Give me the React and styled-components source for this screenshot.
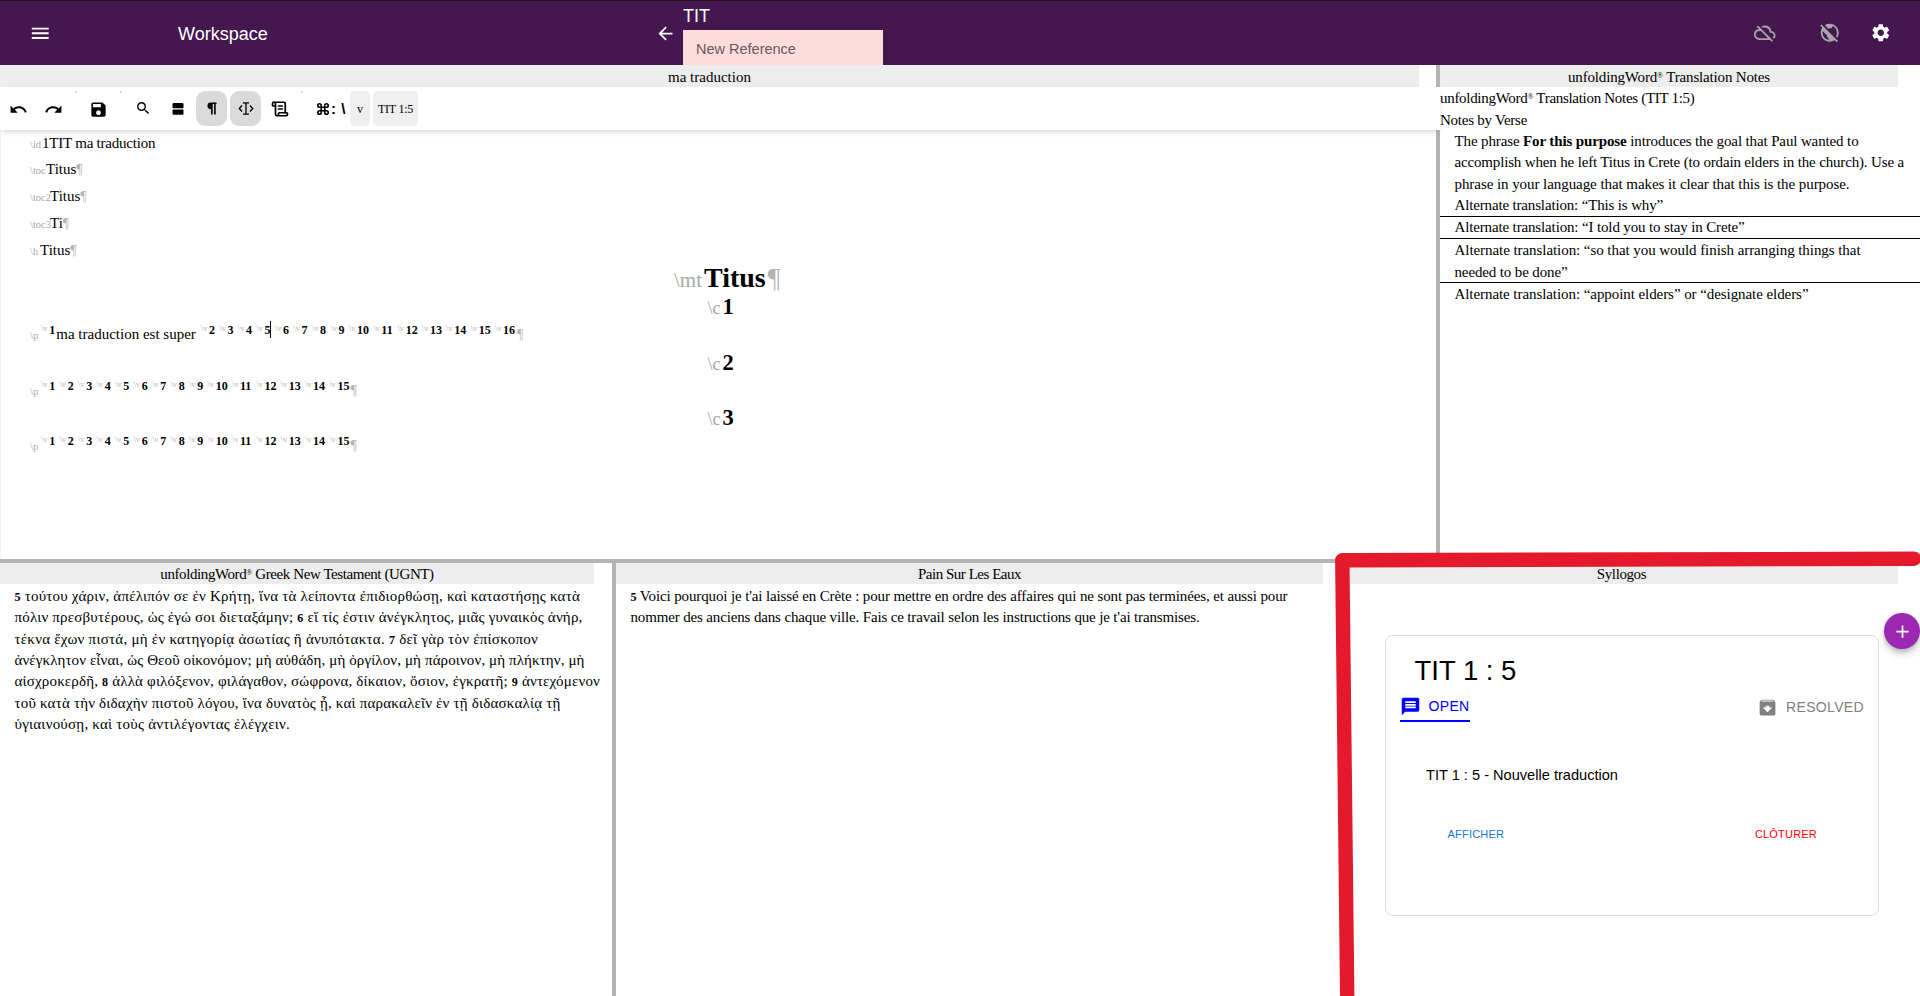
import React from "react";
import styled, { createGlobalStyle } from "styled-components";
import {
  MdMenu, MdArrowBack, MdOutlineCloudOff, MdPublicOff, MdSettings, MdUndo, MdRedo,
  MdSave, MdSearch, MdMessage, MdArchive, MdAdd,
} from "react-icons/md";
import { LuScrollText, LuCommand } from "react-icons/lu";

const serif = `"Liberation Serif", serif`;
const sans = `"Liberation Sans", sans-serif`;

const Global = createGlobalStyle`
  * { box-sizing: border-box; }
  body { margin: 0; background: #fff; color: #000; font-family: ${serif}; font-size: 15px; overflow: hidden; }
`;

const Page = styled.div`
  position: relative;
  display: flex;
  flex-direction: column;
  width: 1920px;
  height: 996px;
  overflow: hidden;
`;

const TopBar = styled.header`
  display: flex;
  align-items: center;
  height: 65px;
  flex: none;
  border-top: 1px solid #1a141c;
  background: #44174e;
  color: #fff;
  font-family: ${sans};
  padding: 0 29px 0 28.5px;
`;
const MenuSlot = styled.div`
  width: 149.5px;
  display: flex;
`;
const AppTitle = styled.div`
  width: 476.5px;
  font-size: 18px;
  line-height: 22px;
  padding-top: 1px;
`;
const BackSlot = styled.div`
  width: 28.5px;
  display: flex;
`;
const Book = styled.div`
  display: flex;
  flex-direction: column;
  align-self: stretch;
  width: 200px;
  font-size: 18px;
  line-height: 29px;
`;
const BookName = styled.div`
  height: 29px;
  line-height: 30px;
`;
const ReferenceField = styled.div`
  height: 35px;
  background: #ffdcdc;
  color: #675a5c;
  padding-left: 13px;
  font-size: 14.5px;
  line-height: 38px;
`;
const BarIcons = styled.div`
  display: flex;
  align-items: center;
  margin-left: auto;
  svg { display: block; }
  svg:nth-child(1) { margin-right: 43.5px; }
  svg:nth-child(2) { margin-right: 29px; }
`;

const Row = styled.div`
  display: flex;
  height: ${(p) => p.$h}px;
  flex: none;
`;
const VDivider = styled.div`
  width: 4px;
  flex: none;
  background: #b4b4b4;
`;
const HDivider = styled.div`
  height: 4px;
  flex: none;
  background: #b4b4b4;
`;
const Panel = styled.section`
  display: flex;
  flex-direction: column;
  width: ${(p) => p.$w}px;
  flex: none;
`;
const PanelHeader = styled.div`
  height: ${(p) => p.$h || 21}px;
  flex: none;
  margin-right: ${(p) => p.$gap}px;
  background: #ededed;
  text-align: center;
  line-height: ${(p) => (p.$h === 22 ? 24 : 22)}px;
  white-space: nowrap;
`;
const Text = styled.span`
  letter-spacing: ${(p) => p.$ls || 0}px;
  white-space: pre;
`;
const Reg = styled.span`
  font-size: 8px;
  line-height: 0;
  vertical-align: 4.5px;
`;

const Toolbar = styled.div`
  position: relative;
  z-index: 1;
  display: flex;
  align-items: flex-start;
  width: 1440px;
  height: 43px;
  flex: none;
  padding: 4px 0 0 0;
  background: #fff;
  box-shadow: 0 3px 6px -2px rgba(0, 0, 0, 0.22);
`;
const Tool = styled.div`
  display: flex;
  align-items: center;
  justify-content: center;
  width: ${(p) => p.$w || 31}px;
  height: 35px;
  margin-right: ${(p) => p.$mr ?? 3}px;
  border-radius: ${(p) => p.$r || 9}px;
  background: ${(p) => p.$bg || "transparent"};
  padding-top: ${(p) => p.$pt || 0}px;
  font-size: 12px;
  svg { display: block; }
`;
const Tick = styled.div`
  width: 2px;
  height: 2px;
  background: #d8d8d8;
`;
const Prompt = styled.div`
  display: flex;
  align-items: center;
  gap: 1px;
  width: 47px;
  height: 35px;
  padding-left: 13px;
  font: bold 15px/16px ${sans};
`;

const EditorBody = styled.div`
  flex: 1;
  border-left: 1px solid #f4f4f4;
`;
const Para = styled.div`
  height: ${(p) => p.$h}px;
  line-height: ${(p) => p.$h}px;
  margin-top: ${(p) => p.$mt || 0}px;
  padding-left: ${(p) => p.$x ?? 29}px;
  white-space: pre;
  font-size: ${(p) => p.$size || 15}px;
  display: ${(p) => (p.$block ? "block" : "flex")};
  align-items: baseline;
`;
const Marker = styled.span`
  color: #a8a8a8;
  font-size: ${(p) => p.$size || 10.5}px;
  width: ${(p) => (p.$w ? p.$w + "px" : "auto")};
  display: inline-block;
`;
const Pilcrow = styled.span`
  color: #b4b4b4;
  font-size: ${(p) => p.$size || 14}px;
  margin-left: ${(p) => p.$ml || 0}px;
`;
const Verse = styled.span`
  display: inline-block;
  width: ${(p) => p.$w}px;
  line-height: 0;
  vertical-align: 5px;
  font-size: 12px;
  font-weight: bold;
`;
const VerseMarker = styled.span`
  display: inline-block;
  width: 8.2px;
  font-size: 8.5px;
  font-weight: normal;
  color: #b4b4b4;
  vertical-align: 3px;
`;
const Caret = styled.span`
  display: inline-block;
  width: 1px;
  height: 17px;
  margin: -9px -1px -8px 0;
  background: #000;
  vertical-align: 4px;
`;

const Notes = styled.div`
  line-height: 22px;
`;
const Note = styled.div`
  padding: ${(p) => p.$pt || 0}px 0 0 14.5px;
  line-height: 21.4px;
  height: ${(p) => p.$h}px;
  border-bottom: ${(p) => (p.$last ? "none" : "1px solid #000")};
`;
const TextLine = styled.div`
  white-space: pre;
`;
const Num = styled.b`
  font-size: 12px;
  line-height: 0;
`;
const Scripture = styled.div`
  padding: 1.8px 0 0 14.5px;
  line-height: 21.4px;
  ${TextLine} { height: 21.4px; }
`;

const Card = styled.div`
  width: 494px;
  height: 281px;
  margin: 51px 0 0 40px;
  border: 1px solid #dedede;
  border-radius: 8px;
  font-family: ${sans};
`;
const CardTitle = styled.div`
  padding: 19px 0 0 28.5px;
  font-size: 27.5px;
  line-height: 32px;
  height: 55px;
`;
const Tabs = styled.div`
  display: flex;
  justify-content: space-between;
  padding: 0 14px 0 14px;
  height: 32px;
`;
const Tab = styled.div`
  display: flex;
  align-items: center;
  height: 31px;
  padding: ${(p) => (p.$active ? "1px 0 0 0" : "1px 0 0")};
  color: ${(p) => (p.$active ? "#0000ff" : "#808080")};
  border-bottom: ${(p) => (p.$active ? "2px solid #0000ff" : "none")};
  font-size: 14px;
  letter-spacing: 0.35px;
  gap: ${(p) => (p.$active ? 7.5 : 7.5)}px;
`;
const CardText = styled.div`
  padding: 41px 0 0 40px;
  font-size: 14.6px;
  line-height: 22px;
`;
const Actions = styled.div`
  display: flex;
  justify-content: space-between;
  padding: 41px 61px 0 61.5px;
  font-size: 11px;
  letter-spacing: 0.2px;
  line-height: 14px;
`;
const Action = styled.span`
  color: ${(p) => p.$color};
`;
const Fab = styled.div`
  position: absolute;
  left: 1884px;
  top: 613px;
  width: 36px;
  height: 36px;
  border-radius: 50%;
  background: #9c27b0;
  color: #fff;
  display: flex;
  align-items: center;
  justify-content: center;
  box-shadow: 0 3px 5px -1px rgba(0, 0, 0, 0.2), 0 5px 9px rgba(0, 0, 0, 0.16);
`;
const Highlight = styled.svg`
  position: absolute;
  inset: 0;
  z-index: 3;
  pointer-events: none;
`;

function Verses({ from, to, caretAfter }) {
  const list = [];
  for (let n = from; n <= to; n++) list.push(n);
  return list.map((n) => (
    <Verse key={n} $w={n === to ? (n > 9 ? 21.2 : 15.5) : n > 9 ? 24.35 : 18.5}>
      <VerseMarker>\v</VerseMarker>
      {n}
      {n === caretAfter && <Caret />}
    </Verse>
  ));
}

function Line({ ls, children }) {
  return <TextLine><Text $ls={ls}>{children}</Text></TextLine>;
}

export default function App() {
  return (
    <Page>
      <Global />
      <TopBar>
        <MenuSlot><MdMenu size={22.5} /></MenuSlot>
        <AppTitle>Workspace</AppTitle>
        <BackSlot><MdArrowBack size={21} /></BackSlot>
        <Book>
          <BookName>TIT</BookName>
          <ReferenceField>New Reference</ReferenceField>
        </Book>
        <BarIcons>
          <MdOutlineCloudOff size={21.5} color="#a9a3aa" />
          <MdPublicOff size={21.5} color="#a9a3aa" />
          <MdSettings size={21.5} />
        </BarIcons>
      </TopBar>

      <Row $h={494}>
        <Panel $w={1436}>
          <PanelHeader $h={22} $gap={17}><Text>ma traduction</Text></PanelHeader>
          <Toolbar>
            <Tool $w={37} $mr={0} $pt={2}><MdUndo size={19} /></Tool>
            <Tool $w={33} $mr={5} $pt={2}><MdRedo size={19} /></Tool>
            <Tick />
            <Tool $w={42} $mr={1} $pt={2}><MdSave size={19} /></Tool>
            <Tick />
            <Tool $w={42} $mr={0}><MdSearch size={16.5} /></Tool>
            <Tool $w={27} $mr={5}>
              <svg width="12" height="12" viewBox="0 0 12 12">
                <rect x="0.5" y="0" width="11" height="5.2" rx="1" />
                <rect x="0.5" y="6.6" width="11" height="5.2" rx="1" />
              </svg>
            </Tool>
            <Tool $bg="#dadada">
              <svg width="10" height="13" viewBox="0 0 10 13">
                <path d="M3.8 0.5H9.6V2H8.7V12.5H7.1V2H5.7V12.5H4.1V7.2H3.8A3.35 3.35 0 0 1 3.8 0.5Z" />
              </svg>
            </Tool>
            <Tool $bg="#dadada">
              <svg width="16" height="13" viewBox="0 0 16 13" fill="none" stroke="#000" strokeWidth="1.3">
                <path d="M4 3.5L1.3 6.5L4 9.5M12 3.5L14.7 6.5L12 9.5" />
                <path d="M5 0.8H7L8 1.6L9 0.8H11M5 12.2H7L8 11.4L9 12.2H11M8 1.6V11.4" />
              </svg>
            </Tool>
            <Tool $w={31} $mr={6} $pt={1}><LuScrollText size={18} strokeWidth={2.3} /></Tool>
            <Tick />
            <Prompt><LuCommand size={14} strokeWidth={2.8} /><span>:</span><span>&nbsp;\</span></Prompt>
            <Tool $w={20} $r={5} $bg="#efefef" $pt={2}>v</Tool>
            <Tool $w={45} $r={5} $bg="#efefef" $pt={2}><Text $ls={-0.25}>TIT 1:5</Text></Tool>
          </Toolbar>
          <EditorBody>
            <Para $h={26}><Marker $w={12}>\id</Marker><Text $ls={-0.22}>1TIT ma traduction</Text></Para>
            <Para $h={27}><Marker $w={16}>\toc</Marker><Text>Titus</Text><Pilcrow>¶</Pilcrow></Para>
            <Para $h={27}><Marker $w={20}>\toc2</Marker><Text>Titus</Text><Pilcrow>¶</Pilcrow></Para>
            <Para $h={27}><Marker $w={20}>\toc3</Marker><Text>Ti</Text><Pilcrow>¶</Pilcrow></Para>
            <Para $h={27}><Marker $w={10}>\h</Marker><Text>Titus</Text><Pilcrow>¶</Pilcrow></Para>
            <Para $h={26} $mt={1} $x={673} $size={28}><Marker $size={21} $w={30}>\mt</Marker><b>Titus</b><Pilcrow $size={28} $ml={2}>¶</Pilcrow></Para>
            <Para $h={32} $x={706.5} $size={22.5}><Marker $size={18} $w={15}>\c</Marker><b>1</b></Para>
            <Para $h={23} $block><Marker $w={11}>\p</Marker><Verse $w={15.3}><VerseMarker>\v</VerseMarker>1</Verse><Text>ma traduction est super</Text><Text $ls={1.2}>{" "}</Text><Verses from={2} to={16} caretAfter={5} /><Pilcrow $ml={1}>¶</Pilcrow></Para>
            <Para $h={33} $x={706.5} $size={22.5}><Marker $size={18} $w={15}>\c</Marker><b>2</b></Para>
            <Para $h={23} $block><Marker $w={11}>\p</Marker><Verses from={1} to={15} /><Pilcrow>¶</Pilcrow></Para>
            <Para $h={32} $x={706.5} $size={22.5}><Marker $size={18} $w={15}>\c</Marker><b>3</b></Para>
            <Para $h={23} $block><Marker $w={11}>\p</Marker><Verses from={1} to={15} /><Pilcrow>¶</Pilcrow></Para>
          </EditorBody>
        </Panel>
        <VDivider />
        <Panel $w={480}>
          <PanelHeader $h={22} $gap={22}><Text $ls={-0.17}>unfoldingWord<Reg>®</Reg> Translation Notes</Text></PanelHeader>
          <Notes>
            <Line ls={-0.3}>unfoldingWord<Reg>®</Reg> Translation Notes (TIT 1:5)</Line>
            <Line ls={-0.25}>Notes by Verse</Line>
            <Note $h={86}>
              <Line ls={-0.128}>The phrase <b>For this purpose</b> introduces the goal that Paul wanted to</Line>
              <Line ls={-0.16}>accomplish when he left Titus in Crete (to ordain elders in the church). Use a</Line>
              <Line ls={-0.065}>phrase in your language that makes it clear that this is the purpose.</Line>
              <Line ls={-0.156}>Alternate translation: “This is why”</Line>
            </Note>
            <Note $h={22}><Line ls={-0.143}>Alternate translation: “I told you to stay in Crete”</Line></Note>
            <Note $h={44} $pt={1.2}>
              <Line ls={-0.062}>Alternate translation: “so that you would finish arranging things that</Line>
              <Line ls={-0.132}>needed to be done”</Line>
            </Note>
            <Note $last $h={22} $pt={1.2}><Line ls={-0.069}>Alternate translation: “appoint elders” or “designate elders”</Line></Note>
          </Notes>
        </Panel>
      </Row>
      <HDivider />
      <Row $h={433}>
        <Panel $w={612}>
          <PanelHeader $gap={18}><Text $ls={-0.41}>unfoldingWord<Reg>®</Reg> Greek New Testament (UGNT)</Text></PanelHeader>
          <Scripture>
            <Line ls={0.215}><Num>5</Num> τούτου χάριν, ἀπέλιπόν σε ἐν Κρήτῃ, ἵνα τὰ λείποντα ἐπιδιορθώσῃ, καὶ καταστήσῃς κατὰ</Line>
            <Line ls={0.188}>πόλιν πρεσβυτέρους, ὡς ἐγώ σοι διεταξάμην; <Num>6</Num> εἴ τίς ἐστιν ἀνέγκλητος, μιᾶς γυναικὸς ἀνήρ,</Line>
            <Line ls={0.253}>τέκνα ἔχων πιστά, μὴ ἐν κατηγορίᾳ ἀσωτίας ἢ ἀνυπότακτα. <Num>7</Num> δεῖ γὰρ τὸν ἐπίσκοπον</Line>
            <Line ls={0.115}>ἀνέγκλητον εἶναι, ὡς Θεοῦ οἰκονόμον; μὴ αὐθάδη, μὴ ὀργίλον, μὴ πάροινον, μὴ πλήκτην, μὴ</Line>
            <Line ls={0.17}>αἰσχροκερδῆ, <Num>8</Num> ἀλλὰ φιλόξενον, φιλάγαθον, σώφρονα, δίκαιον, ὅσιον, ἐγκρατῆ; <Num>9</Num> ἀντεχόμενον</Line>
            <Line ls={0.198}>τοῦ κατὰ τὴν διδαχὴν πιστοῦ λόγου, ἵνα δυνατὸς ᾖ, καὶ παρακαλεῖν ἐν τῇ διδασκαλίᾳ τῇ</Line>
            <Line ls={0.229}>ὑγιαινούσῃ, καὶ τοὺς ἀντιλέγοντας ἐλέγχειν.</Line>
          </Scripture>
        </Panel>
        <VDivider />
        <Panel $w={725}>
          <PanelHeader $gap={18}><Text $ls={-0.48}>Pain Sur Les Eaux</Text></PanelHeader>
          <Scripture>
            <Line ls={-0.124}><Num>5</Num> Voici pourquoi je t'ai laissé en Crète : pour mettre en ordre des affaires qui ne sont pas terminées, et aussi pour</Line>
            <Line ls={-0.148}>nommer des anciens dans chaque ville. Fais ce travail selon les instructions que je t'ai transmises.</Line>
          </Scripture>
        </Panel>
        <VDivider />
        <Panel $w={575}>
          <PanelHeader $gap={22}><Text $ls={-0.4}>Syllogos</Text></PanelHeader>
          <Card>
            <CardTitle>TIT 1 : 5</CardTitle>
            <Tabs>
              <Tab $active><MdMessage size={21} />OPEN</Tab>
              <Tab><MdArchive size={21} />RESOLVED</Tab>
            </Tabs>
            <CardText>TIT 1 : 5 - Nouvelle traduction</CardText>
            <Actions>
              <Action $color="#1976d2">AFFICHER</Action>
              <Action $color="#ff0000">CLÔTURER</Action>
            </Actions>
          </Card>
        </Panel>
      </Row>
      <Fab><MdAdd size={21} /></Fab>
      <Highlight width="1920" height="996" viewBox="0 0 1920 996" fill="none" stroke="#e5192c" strokeWidth="14.4" strokeLinecap="round" strokeLinejoin="round">
        <path d="M1914 558.7L1342.3 560.3L1347.3 1004" />
      </Highlight>
    </Page>
  );
}
